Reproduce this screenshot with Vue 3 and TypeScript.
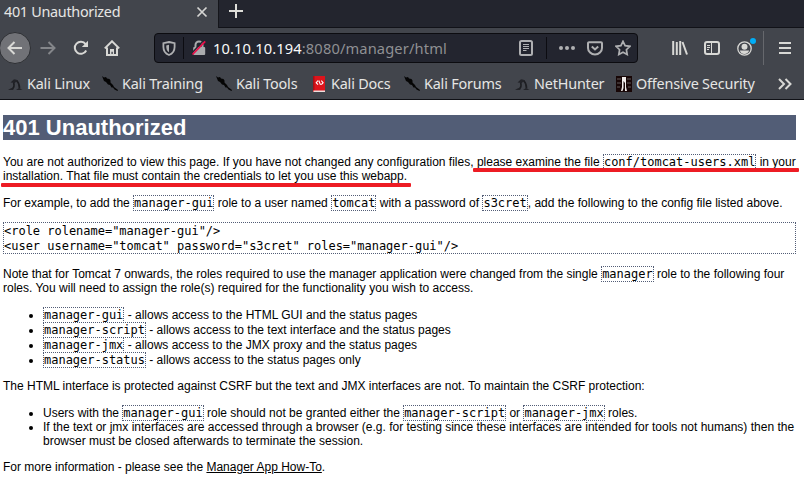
<script setup lang="ts">
interface Bookmark {
  label: string
  icon: 'dragon' | 'knife' | 'book' | 'offsec'
  left: number
}

const bookmarks: Bookmark[] = [
  { label: 'Kali Linux', icon: 'dragon', left: 7 },
  { label: 'Kali Training', icon: 'knife', left: 102 },
  { label: 'Kali Tools', icon: 'knife', left: 216 },
  { label: 'Kali Docs', icon: 'book', left: 311 },
  { label: 'Kali Forums', icon: 'knife', left: 404 },
  { label: 'NetHunter', icon: 'dragon', left: 514 },
  { label: 'Offensive Security', icon: 'offsec', left: 616 },
]

const widths = bookmarks.map((b, i) => (bookmarks[i + 1]?.left ?? 776) - b.left)

const roles: { name: string; text: string }[] = [
  { name: 'manager-gui', text: 'allows access to the HTML GUI and the status pages' },
  { name: 'manager-script', text: 'allows access to the text interface and the status pages' },
  { name: 'manager-jmx', text: 'allows access to the JMX proxy and the status pages' },
  { name: 'manager-status', text: 'allows access to the status pages only' },
]

const config = '<role rolename="manager-gui"/>\n<user username="tomcat" password="s3cret" roles="manager-gui"/>'
</script>

<template>
  <div class="window">
    <header class="chrome">
      <div class="tabs">
        <div class="tab">
          <span class="tab-title">401 Unauthorized</span>
          <svg class="close" width="12" height="12" viewBox="0 0 12 12"><path d="M1.5 1.5l9 9M10.5 1.5l-9 9" /></svg>
        </div>
        <div class="newtab">
          <svg width="14" height="14" viewBox="0 0 14 14"><path d="M7 0v14M0 7h14" /></svg>
        </div>
      </div>

      <nav class="toolbar">
        <div class="back">
          <svg class="ic" width="16" height="16" viewBox="0 0 16 16"><path d="M15 8H1.5M7.5 2l-6 6 6 6" /></svg>
        </div>
        <svg class="ic forward" width="16" height="16" viewBox="0 0 16 16"><path d="M0.5 8h14M8.5 2l6 6-6 6" /></svg>
        <svg class="ic reload" width="16" height="16" viewBox="0 0 16 16"><path d="M13.2 10.5A6 6 0 1 1 12.6 4.2" /><path class="solid" d="M15 0.8v6.2H8.8z" /></svg>
        <svg class="ic home" width="16" height="16" viewBox="0 0 16 16"><path d="M0.8 8.4L8 1.3l7.2 7.1M3 7.5V15h10V7.5" /><path class="solid" d="M6 9h4v5H8.8v-2.2H7.4V14H6z" /></svg>
        <div class="url">
          <svg class="ic shield" width="14" height="15" viewBox="0 0 14 15"><path d="M7 1L12.6 2.2V6c0 4-2.2 6.700-5.600 8C3.600 12.700 1.400 10 1.400 6V2.200z" /><path class="solid" d="M7 3.800v7.500C5 10 4.200 8.200 4.200 4.400z" /></svg>
          <i class="sep"></i>
          <svg class="lock" width="16" height="16" viewBox="0 0 16 16">
            <path class="shackle" d="M4.500 8V5a3.500 3.500 0 0 1 7 0v3" />
            <rect x="2.200" y="7" width="12" height="8" rx="1" />
            <path class="gap" d="M0 14L13 0" />
            <path class="slash" d="M1.500 14.500L14.200 1.300" />
          </svg>
          <span class="address"><b>10.10.10.194</b>:8080/manager/html</span>
          <svg class="ic reader" width="14" height="16" viewBox="0 0 14 16"><rect x="1" y="1" width="12" height="14" rx="1.500" /><path class="thin" d="M4 4.500h6M4 6.500h6M4 8.500h6M4 10.500h3.500" /></svg>
          <i class="sep right"></i>
          <svg class="ic dots" width="16" height="4" viewBox="0 0 16 4"><circle cx="2" cy="2" r="2" /><circle cx="8" cy="2" r="2" /><circle cx="14" cy="2" r="2" /></svg>
          <svg class="ic pocket" width="16" height="15" viewBox="0 0 16 15"><path d="M2 1.200h12a1 1 0 0 1 1 1V7a7 6.500 0 0 1-14 0V2.200a1 1 0 0 1 1-1z" /><path d="M4.800 5.500L8 8.500l3.200-3" /></svg>
          <svg class="ic star" width="16" height="16" viewBox="0 0 16 16"><path d="M8 1.300l2.100 4.300 4.800.7-3.500 3.400.8 4.800L8 12.200l-4.200 2.300.8-4.800-3.500-3.400 4.800-.7z" /></svg>
        </div>
        <svg class="ic library" width="16" height="14" viewBox="0 0 16 14"><path d="M1.200 0v14M4.800 1v13M8.200 0v14M10.500 1l4.500 12.500" /></svg>
        <svg class="ic sidebar" width="16" height="14" viewBox="0 0 16 14"><rect x="1" y="1" width="14" height="12" rx="2" /><path class="thin" d="M7.500 1v12M3 4.500h3M3 6.500h3M3 8.500h2" /></svg>
        <div class="account">
          <svg class="ic" width="15" height="15" viewBox="0 0 15 15"><circle class="ring" cx="7.500" cy="7.500" r="6.700" /><circle cx="7.500" cy="5.700" r="3" /><path class="solid" d="M2.800 9.500h9.400Q11 12.800 7.500 13T2.800 9.500z" /></svg>
          <span class="notice"></span>
        </div>
        <i class="divider"></i>
        <svg class="ic menu" width="12" height="14" viewBox="0 0 12 14"><path d="M0 2h12M0 7h12M0 12h12" /></svg>
      </nav>

      <div class="bookmarks">
        <div v-for="(b, i) in bookmarks" :key="b.label" class="bookmark" :style="{ width: widths[i] + 'px' }">
          <svg v-if="b.icon === 'dragon'" class="favicon" width="16" height="16" viewBox="0 0 16 16"><path d="M4.500 13.200C7 12 7.500 10 6.800 7.500 7 5 8.500 4 10 5c2 2 2.500 5 2.500 7.500" fill="none" stroke="#1d1e22" stroke-width="1.700" /><path d="M3.500 6.500l3.500-3.300 4 1-2 2-3 .5zM1 14l3-1.800 3 .3-1 1.500zM9 14l3-2 3.500 2z" fill="#222328" /></svg>
          <svg v-else-if="b.icon === 'knife'" class="favicon" width="16" height="16" viewBox="0 0 16 16"><path d="M0 0l2 1.500 2-.5 1 1.500 2.500.5 1 1.500v2l2.500 2.500 1 2L16 14l-.5 1-3-1.500-1.500-2-1.500 0-1.500-2.500-2-.5-2-2.500L2 5z" fill="#050505" /></svg>
          <svg v-else-if="b.icon === 'book'" class="favicon" width="16" height="16" viewBox="0 0 16 16"><path d="M2 0h12v16H2z" fill="#dc141c" /><path d="M2 0h1.500v14H2z" fill="#a90e14" /><path d="M2.500 14.500H14V16H2.500z" fill="#eee0df" /><path d="M7 4.700L5.200 6.700l1.800 2M10.300 4.700l1.800 2-1.800 2M7.800 4.500l1.700 4.400" fill="none" stroke="#fff" stroke-width="1.100" /></svg>
          <svg v-else class="favicon" width="16" height="16" viewBox="0 0 16 16"><path d="M0 0h16v16H0z" fill="#170606" /><path d="M1 3h4M11 3h4M1 7h4M11 7h4M1 11h3M12 11h3" stroke="#635b5b" /><path d="M6 1h4v10l1 4H9V7L7.500 5v7L6.500 15H5l1-4z" fill="#efebe9" /></svg>
          <span class="label">{{ b.label }}</span>
        </div>
        <svg class="ic more" width="14" height="12" viewBox="0 0 14 12"><path d="M1 1l5 5-5 5M7.500 1l5 5-5 5" /></svg>
      </div>
    </header>

    <main class="page">
      <h1>401 Unauthorized</h1>
      <p>
        You are not authorized to view this page. If you have not changed any configuration files,
        <span class="marked first">please examine the file <code>conf/tomcat-users.xml</code> in your</span><br>
        <span class="marked second">installation. That file must contain the credentials to let you use this webapp.</span>
      </p>
      <p class="example">For example, to add the <code>manager-gui</code> role to a user named <code>tomcat</code> with a password of <code>s3cret</code>, add the following to the config file listed above.</p>
      <pre>{{ config }}</pre>
      <p>
        Note that for Tomcat 7 onwards, the roles required to use the manager application were changed from the single <code>manager</code> role to the following four<br>
        roles. You will need to assign the role(s) required for the functionality you wish to access.
      </p>
      <ul>
        <li v-for="role in roles" :key="role.name" class="tall"><code>{{ role.name }}</code> - {{ role.text }}</li>
      </ul>
      <p>The HTML interface is protected against CSRF but the text and JMX interfaces are not. To maintain the CSRF protection:</p>
      <ul>
        <li class="tall">Users with the <code>manager-gui</code> role should not be granted either the <code>manager-script</code> or <code>manager-jmx</code> roles.</li>
        <li>If the text or jmx interfaces are accessed through a browser (e.g. for testing since these interfaces are intended for tools not humans) then the<br>browser must be closed afterwards to terminate the session.</li>
      </ul>
      <p>For more information - please see the <a>Manager App How-To</a>.</p>
    </main>
  </div>
</template>

<style>
html, body { overflow: hidden; background: #fff; }
</style>

<style scoped>
.window { width: 804px; height: 487px; overflow: hidden; background: #fff; }
.chrome { height: 100px; box-sizing: border-box; background: #42454c; border-bottom: 1px solid #101116; font-family: "Noto Sans", sans-serif; font-size: 14.67px; color: #e6e6e4; white-space: nowrap; }
svg { display: block; flex: none; }
.tabs { display: flex; height: 28px; box-sizing: border-box; background: #23252e; }
.tab { display: flex; align-items: center; justify-content: space-between; width: 219px; height: 28px; box-sizing: border-box; padding: 0 10px 4px 4px; background: #42454c; border-right: 1px solid #15161b; }
.tab-title { line-height: 22px; font-size: 14.4px; letter-spacing: -0.3px; }
.close { fill: none; stroke: #d5d5d3; stroke-width: 1.7; }
.newtab { flex: 1; padding: 4px 0 0 10px; border-bottom: 1px solid #111218; }
.newtab svg { fill: none; stroke: #deded9; stroke-width: 2; }
.toolbar { display: flex; align-items: center; height: 40px; }
.ic { fill: none; stroke: #d8d8d5; stroke-width: 2; }
.ic .solid { fill: #d8d8d5; stroke: none; }
.ic .thin { stroke-width: 1; }
.back { display: flex; align-items: center; justify-content: center; width: 32px; height: 32px; box-sizing: border-box; margin-left: -1px; border: 1px solid #2e3034; border-radius: 50%; background: #717277; }
.forward { margin-left: 9px; stroke: #84868a; }
.reload { margin-left: 17px; }
.home { margin-left: 15px; }
.url { display: flex; align-items: center; width: 484px; height: 30px; box-sizing: border-box; margin-left: 34px; border: 1px solid #0c0c10; border-radius: 4px; background: #23252f; }
.url .ic { stroke: #afb0b2; }
.url .solid, .dots { fill: #afb0b2; }
.url .dots { stroke: none; }
.shield { margin-left: 7px; }
.url .shield { stroke-width: 1.8; }
.sep { width: 1px; height: 22px; margin-left: 7px; background: #0c0c11; }
.lock { margin-left: 7px; fill: #aaabad; }
.shackle { fill: none; stroke: #aaabad; stroke-width: 2; }
.gap { stroke: #23252f; stroke-width: 1.5; }
.slash { stroke: #ed0c48; stroke-width: 1.7; }
.address { width: 306px; margin-left: 6px; color: #8f9093; letter-spacing: 0.13px; }
.address b { font-weight: 400; color: #fafafa; }
.sep.right { margin-left: 13px; }
.dots { margin-left: 12px; }
.pocket { margin-left: 12px; }
.star { margin-left: 12px; }
.url .star { stroke-width: 1.7; }
.library { margin-left: 34px; }
.sidebar { margin-left: 16px; }
.account { position: relative; margin-left: 17px; }
.account .ring { stroke-width: 1.3; }
.account circle:not(.ring) { fill: #d8d8d5; stroke: none; }
.notice { position: absolute; top: -3px; right: -4px; width: 6px; height: 6px; border-radius: 50%; background: #00aef7; }
.divider { width: 1px; height: 34px; margin-left: 11px; background: #66686d; }
.menu { margin-left: 15px; }
.bookmarks { display: flex; align-items: center; height: 31px; padding-left: 7px; }
.bookmark { display: flex; align-items: center; gap: 4px; flex: none; }
.label { font-size: 14.4px; letter-spacing: -0.18px; line-height: 20px; padding-top: 1px; }
.more { margin-left: 2px; }

.page { width: 793px; margin-left: 3px; font: 12px/14px "Liberation Sans", Arial, sans-serif; color: #000; white-space: nowrap; }
h1 { height: 25px; margin: 15px 0 14.7px; background: #525d76; color: #fff; font-size: 22px; line-height: 25px; }
p { margin: 12px 0; }
.example { margin-top: 13px; }
code, pre { font-family: "DejaVu Sans Mono", monospace; font-size: 12px; letter-spacing: -0.015px; border: 1px dotted #525d76; }
pre { height: 32px; box-sizing: border-box; margin: 12px 0; padding-top: 1px; line-height: 15px; }
pre + p, .tall { padding-top: 1px; }
ul { margin: 12px 0; padding-left: 40px; }
a { color: #000; text-decoration: underline; }
.marked { position: relative; }
.marked::after { content: ""; position: absolute; height: 4px; border-radius: 1px; background: #ed1c24; }
.first::after { left: -4px; right: -3px; top: 13px; }
.second::after { left: -2px; right: -4px; top: 14px; }
</style>
